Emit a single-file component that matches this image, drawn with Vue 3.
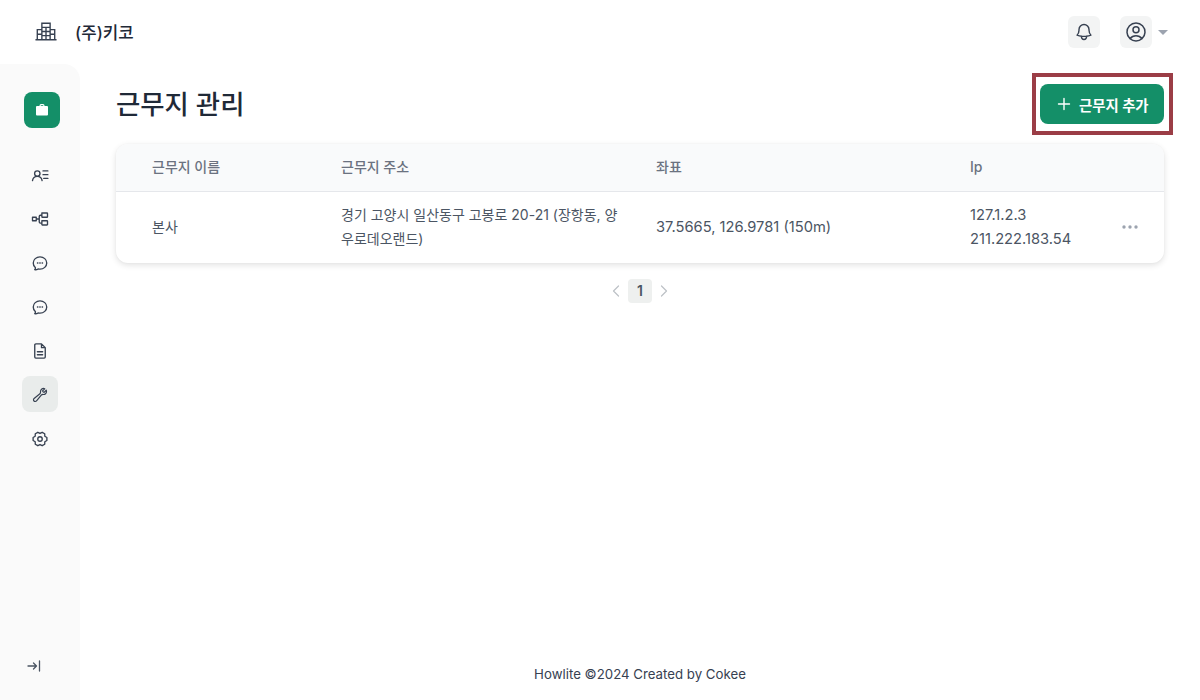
<script setup>
// six-toothed outline for the settings icon
function gearPath() {
  const pts = []
  for (let i = 0; i < 6; i++) {
    const a = i * 60
    for (const [off, r] of [[-12, 9.4], [12, 9.4], [30, 7.4]]) {
      const rad = ((a + off) * Math.PI) / 180
      pts.push((12 + r * Math.cos(rad)).toFixed(2) + ' ' + (12 + r * Math.sin(rad)).toFixed(2))
    }
  }
  return 'M' + pts.join('L') + 'ZM15 12a3 3 0 1 1-6 0 3 3 0 0 1 6 0Z'
}

// sidebar entries, each one a stroked 24x24 path
const chat = 'M8.6 12h.6M11.7 12h.6M14.8 12h.6M21 12c0 4.56-4.03 8.25-9 8.25a9.76 9.76 0 0 1-2.55-.34A5.97 5.97 0 0 1 5.41 20.97a5.97 5.97 0 0 1-.47-.07 4.48 4.48 0 0 0 .98-2.02c.09-.46-.13-.9-.47-1.23C3.93 16.18 3 14.19 3 12c0-4.56 4.03-8.25 9-8.25s9 3.69 9 8.25Z'
const nav = [
  { id: 'members', d: 'M12 10a3.6 3.6 0 1 0-7.200 0 3.600 3.600 0 0 0 7.200 0ZM2 19.500c.5-3.400 3-5.700 6.400-5.700s5.900 2.300 6.400 5.700M16 6.500h6.500M16 11.500h6.500M17 16.500h5.500' },
  { id: 'org', d: 'M2 9.700h5v4.600H2zM14.500 4h6.800a.7.700 0 0 1 .7.700v4.300a.7.700 0 0 1-.7.700h-6.100a.7.700 0 0 1-.7-.7ZM14.500 14.300h6.800a.7.700 0 0 1 .7.700v4.300a.7.700 0 0 1-.7.700h-6.100a.7.700 0 0 1-.7-.7ZM7 12h4M14.500 7H12.500a1.500 1.500 0 0 0-1.500 1.500v7.500a1.500 1.500 0 0 0 1.500 1.500h2' },
  { id: 'chat-a', d: chat },
  { id: 'chat-b', d: chat },
  { id: 'docs', d: 'M14 2.500H6.500A1.500 1.500 0 0 0 5 4v16a1.500 1.500 0 0 0 1.500 1.500h11A1.500 1.500 0 0 0 19 20V7.500ZM14 2.500v5h5M8.500 13h7M8.500 17h7' },
  { id: 'tools', active: true, d: 'M21.75 6.75a4.5 4.5 0 0 1-4.88 4.48c-1.08-.09-2.27.07-2.95.9l-7.15 8.690a2.550 2.550 0 1 1-3.590-3.590l8.690-7.150c.83-.69 1-1.870.9-2.950a4.500 4.500 0 0 1 6.340-4.490l-3.280 3.280a3 3 0 0 0 2.250 2.250l3.280-3.280c.25.57.4 1.190.4 1.850Z' },
  { id: 'settings', d: gearPath() },
]

const columns = ['근무지 이름', '근무지 주소', '좌표', 'Ip']
const sites = [
  {
    name: '본사',
    address: '경기 고양시 일산동구 고봉로 20-21 (장항동, 양우로데오랜드)',
    coords: '37.5665, 126.9781 (150m)',
    ips: ['127.1.2.3', '211.222.183.54'],
  },
]
</script>

<template>
  <div class="layout">
    <header class="topbar">
      <div class="company">
        <svg class="company-icon" viewBox="0 0 24 24" fill="none" stroke="currentColor" stroke-width="1.500">
          <path d="M0.500 21.500h23M2.500 21.500V10.500h5M21.500 21.500V10.500h-5M7.500 21.500V3.500h9v18M12 7.500v14M7.500 8h9M7.500 12.500h9M7.500 17h9M2.500 15.500h5M16.500 15.500h5" />
        </svg>
        <span>(주)키코</span>
      </div>
      <div class="top-actions">
        <button class="square-btn">
          <svg viewBox="0 0 24 24" fill="none" stroke="currentColor" stroke-width="1.700" stroke-linecap="round" stroke-linejoin="round">
            <path d="M14.860 17.080a23.850 23.850 0 0 0 5.450-1.310A8.970 8.970 0 0 1 18 9.750V9A6 6 0 0 0 6 9v.75a8.970 8.970 0 0 1-2.310 6.020c1.730.64 3.560 1.090 5.450 1.310m5.720 0a24.250 24.250 0 0 1-5.720 0m5.720 0a3 3 0 1 1-5.720 0" />
          </svg>
        </button>
        <div class="user">
          <button class="square-btn">
            <svg class="avatar" viewBox="0 0 24 24" fill="none" stroke="currentColor" stroke-width="1.500" stroke-linecap="round" stroke-linejoin="round">
              <path d="M17.980 18.730A7.490 7.490 0 0 0 12 15.750a7.490 7.490 0 0 0-5.980 2.980m11.960 0a9 9 0 1 0-11.960 0m11.960 0A8.970 8.970 0 0 1 12 21a8.970 8.970 0 0 1-5.980-2.270M15 9.750a3 3 0 1 1-6 0 3 3 0 0 1 6 0Z" />
            </svg>
          </button>
          <span class="caret"></span>
        </div>
      </div>
    </header>

    <div class="body">
      <aside class="sidebar">
        <div class="brand">
          <svg viewBox="0 0 16 16" fill="currentColor">
            <path d="M5.500 3.500A1.500 1.500 0 0 1 7 2h2a1.500 1.500 0 0 1 1.500 1.500V4H13a1 1 0 0 1 1 1v7.500a1 1 0 0 1-1 1H3a1 1 0 0 1-1-1V5a1 1 0 0 1 1-1h2.500Zm1.200.500h2.600v-.500a.3.300 0 0 0-.3-.3H7a.3.300 0 0 0-.3.3Z" />
          </svg>
        </div>
        <nav class="nav">
          <a v-for="item in nav" :key="item.id" class="nav-item" :class="{ active: item.active }">
            <svg viewBox="0 0 24 24" fill="none" stroke="currentColor" stroke-width="1.800" stroke-linecap="round" stroke-linejoin="round">
              <path :d="item.d" />
            </svg>
          </a>
        </nav>
        <a class="collapse">
          <svg viewBox="0 0 16 16" fill="none" stroke="currentColor" stroke-width="1.300" stroke-linecap="round" stroke-linejoin="round">
            <path d="M2 8h8.500M7.500 5l3 3-3 3M13.500 3v10" />
          </svg>
        </a>
      </aside>

      <main class="main">
        <div class="page-head">
          <h1>근무지 관리</h1>
          <button class="add-btn">
            <svg viewBox="0 0 16 16" fill="none" stroke="currentColor" stroke-width="1.400" stroke-linecap="round">
              <path d="M8 2.500v11M2.500 8h11" />
            </svg>
            <span>근무지 추가</span>
            <span class="highlight"></span>
          </button>
        </div>

        <div class="table">
          <div class="row head">
            <div v-for="col in columns" :key="col" class="cell">{{ col }}</div>
          </div>
          <div v-for="site in sites" :key="site.name" class="row">
            <div class="cell">{{ site.name }}</div>
            <div class="cell address">{{ site.address }}</div>
            <div class="cell num">{{ site.coords }}</div>
            <div class="cell num ip-cell">
              <div>
                <div v-for="ip in site.ips" :key="ip">{{ ip }}</div>
              </div>
              <svg class="more" viewBox="0 0 16 4" fill="currentColor">
                <circle cx="2" cy="2" r="1.700" />
                <circle cx="8" cy="2" r="1.700" />
                <circle cx="14" cy="2" r="1.700" />
              </svg>
            </div>
          </div>
        </div>

        <div class="pager">
          <svg viewBox="0 0 16 16" fill="none" stroke="currentColor" stroke-width="1.200" stroke-linecap="round" stroke-linejoin="round">
            <path d="M10.500 3 5.500 8l5 5" />
          </svg>
          <span class="page">1</span>
          <svg viewBox="0 0 16 16" fill="none" stroke="currentColor" stroke-width="1.200" stroke-linecap="round" stroke-linejoin="round">
            <path d="m5.500 3 5 5-5 5" />
          </svg>
        </div>

        <footer class="footer">Howlite ©2024 Created by Cokee</footer>
      </main>
    </div>
  </div>
</template>

<style scoped>
.layout {
  height: 700px;
  display: flex;
  flex-direction: column;
  font-family: Inter, "Noto Sans CJK KR", sans-serif;
  font-size: 14px;
  color: #1f2937;
  background: #fff;
}

.topbar {
  height: 64px;
  flex-shrink: 0;
  display: flex;
  align-items: center;
  justify-content: space-between;
  padding: 0 32px 0 35px;
}

.company {
  display: flex;
  align-items: center;
  gap: 18px;
  font-size: 16.8px;
  font-weight: 500;
}

.company-icon {
  width: 22px;
  height: 22px;
  margin-bottom: 2px;
  color: #374151;
}

.top-actions {
  display: flex;
  align-items: center;
  gap: 20px;
}

.user {
  display: flex;
  align-items: center;
  gap: 6px;
}

.square-btn {
  width: 32px;
  height: 32px;
  padding: 0;
  border: 0;
  border-radius: 6px;
  background: #f3f4f4;
  color: #374151;
  display: flex;
  align-items: center;
  justify-content: center;
}

.square-btn svg {
  width: 20px;
  height: 20px;
}

.square-btn .avatar {
  width: 24px;
  height: 24px;
}

.caret {
  width: 0;
  height: 0;
  border-left: 5px solid transparent;
  border-right: 5px solid transparent;
  border-top: 5px solid #9ca3af;
}

.body {
  flex: 1;
  display: flex;
  min-height: 0;
}

.sidebar {
  width: 80px;
  flex-shrink: 0;
  display: flex;
  flex-direction: column;
  align-items: center;
  background: #fafafa;
  border-top-right-radius: 16px;
  padding-top: 28px;
}

.brand {
  width: 36px;
  height: 36px;
  margin-left: 4px;
  border-radius: 8px;
  background: #148f68;
  color: #fff;
  display: flex;
  align-items: center;
  justify-content: center;
}

.brand svg {
  width: 16px;
  height: 16px;
}

.nav {
  display: flex;
  flex-direction: column;
  gap: 8px;
  margin-top: 28px;
}

.nav-item {
  width: 36px;
  height: 36px;
  box-sizing: border-box;
  padding-top: 2px;
  border-radius: 8px;
  color: #374151;
  display: flex;
  align-items: center;
  justify-content: center;
}

.nav-item svg {
  width: 18px;
  height: 18px;
}

.nav-item.active svg {
  width: 16px;
  height: 16px;
}

.nav-item.active {
  background: #e9eceb;
}

.collapse {
  margin-top: auto;
  margin-bottom: 26px;
  width: 16px;
  height: 16px;
  margin-left: -12px;
  color: #4b5563;
}

.main {
  flex: 1;
  min-width: 0;
  display: flex;
  flex-direction: column;
  padding: 20px 36px 0;
}

.page-head {
  display: flex;
  align-items: center;
  justify-content: space-between;
  height: 40px;
  margin-bottom: 20px;
}

h1 {
  margin: 0 0 4px;
  font-size: 26.4px;
  font-weight: 500;
  color: #1f2937;
}

.add-btn {
  position: relative;
  width: 124px;
  height: 40px;
  padding: 0 16px;
  border: 0;
  border-radius: 8px;
  background: #148f68;
  color: #fff;
  font: inherit;
  font-size: 14.4px;
  font-weight: 700;
  white-space: nowrap;
  display: flex;
  align-items: center;
  gap: 7px;
}

.add-btn svg {
  width: 16px;
  height: 16px;
  flex-shrink: 0;
}

.highlight {
  position: absolute;
  left: -8px;
  top: -11px;
  width: 141px;
  height: 62px;
  box-sizing: border-box;
  border: 4px solid #9b3d46;
}

.table {
  border-radius: 12px;
  overflow: hidden;
  box-shadow: 0 2px 6px rgba(0, 0, 0, 0.12), 0 0 2px rgba(0, 0, 0, 0.04);
}

.row {
  display: grid;
  grid-template-columns: 225px 315px 314px 1fr;
  align-items: center;
  box-sizing: border-box;
  height: 71px;
  padding-bottom: 2px;
  color: #4b5563;
  line-height: 24px;
}

.row.head {
  height: 48px;
  background: #f9fafb;
  border-bottom: 1px solid #e5e7eb;
  color: #6b7280;
  font-weight: 500;
}

.cell:first-child {
  padding-left: 36px;
}

.address {
  padding-right: 32px;
}

.num {
  font-size: 14.7px;
}

.ip-cell {
  display: flex;
  align-items: center;
  justify-content: space-between;
  padding-right: 26px;
}

.more {
  width: 16px;
  height: 4px;
  color: #9ca3af;
}

.pager {
  display: flex;
  align-items: center;
  justify-content: center;
  gap: 4px;
  margin-top: 16px;
  color: #c4c8cc;
}

.pager svg {
  width: 16px;
  height: 16px;
  color: #bcc1c6;
}

.page {
  width: 24px;
  height: 24px;
  border-radius: 4px;
  background: #eef0ef;
  color: #4b5563;
  font-weight: 600;
  text-align: center;
  line-height: 24px;
}

.footer {
  margin-top: auto;
  padding-bottom: 17px;
  text-align: center;
  color: #374151;
  font-size: 13.25px;
  line-height: 18px;
}
</style>
